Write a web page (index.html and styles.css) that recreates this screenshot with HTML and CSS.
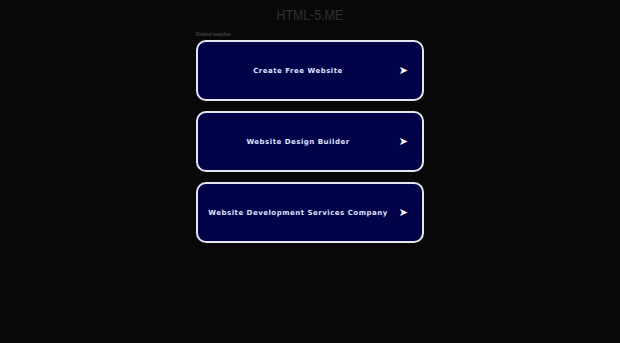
FILE: index.html
```html
<!DOCTYPE html>
<html>
<head>
<meta charset="utf-8">
<link rel="stylesheet" href="styles.css">
</head>
<body>
<header class="top"><span class="title">HTML-5.ME</span></header>
<main class="wrap">
  <div class="label">Related searches</div>
  <ul class="list">
    <li class="item"><span class="text">Create Free Website</span><span class="arrow">➤</span></li>
    <li class="item"><span class="text">Website Design Builder</span><span class="arrow">➤</span></li>
    <li class="item"><span class="text">Website Development Services Company</span><span class="arrow">➤</span></li>
  </ul>
</main>
</body>
</html>
```

FILE: styles.css
```css
html, body {
  margin: 0;
  padding: 0;
  background: #080808;
  height: 100%;
}
.top {
  font-family: "Liberation Sans", Arial, sans-serif;
  font-size: 14px;
  color: #303030;
  text-align: center;
  line-height: 16px;
  padding-top: 7px;
  height: 23px;
  box-sizing: border-box;
}
.title {
  display: inline-block;
  transform: scaleX(0.88);
}
.wrap {
  width: 228px;
  margin: 0 auto;
  padding-top: 9px;
}
.label {
  font-family: "Liberation Sans", Arial, sans-serif;
  font-size: 4.5px;
  line-height: 5px;
  color: #555;
  height: 8px;
}
.list {
  list-style: none;
  margin: 0;
  padding: 0;
  display: flex;
  flex-direction: column;
  gap: 10px;
}
.item {
  height: 61px;
  box-sizing: border-box;
  border: 2px solid #e6e6f0;
  border-radius: 10px;
  background: #020249;
  display: flex;
  align-items: center;
  padding: 0 14px 0 0;
  font-family: "DejaVu Sans", Verdana, sans-serif;
  font-weight: bold;
  font-size: 7px;
  letter-spacing: 0.5px;
  color: #dde0ff;
}
.text {
  flex: 1;
  text-align: center;
  white-space: nowrap;
}
.arrow {
  width: 10px;
  text-align: right;
  font-size: 11px;
  letter-spacing: 0;
  color: #ffffff;
  line-height: 10px;
}
```
